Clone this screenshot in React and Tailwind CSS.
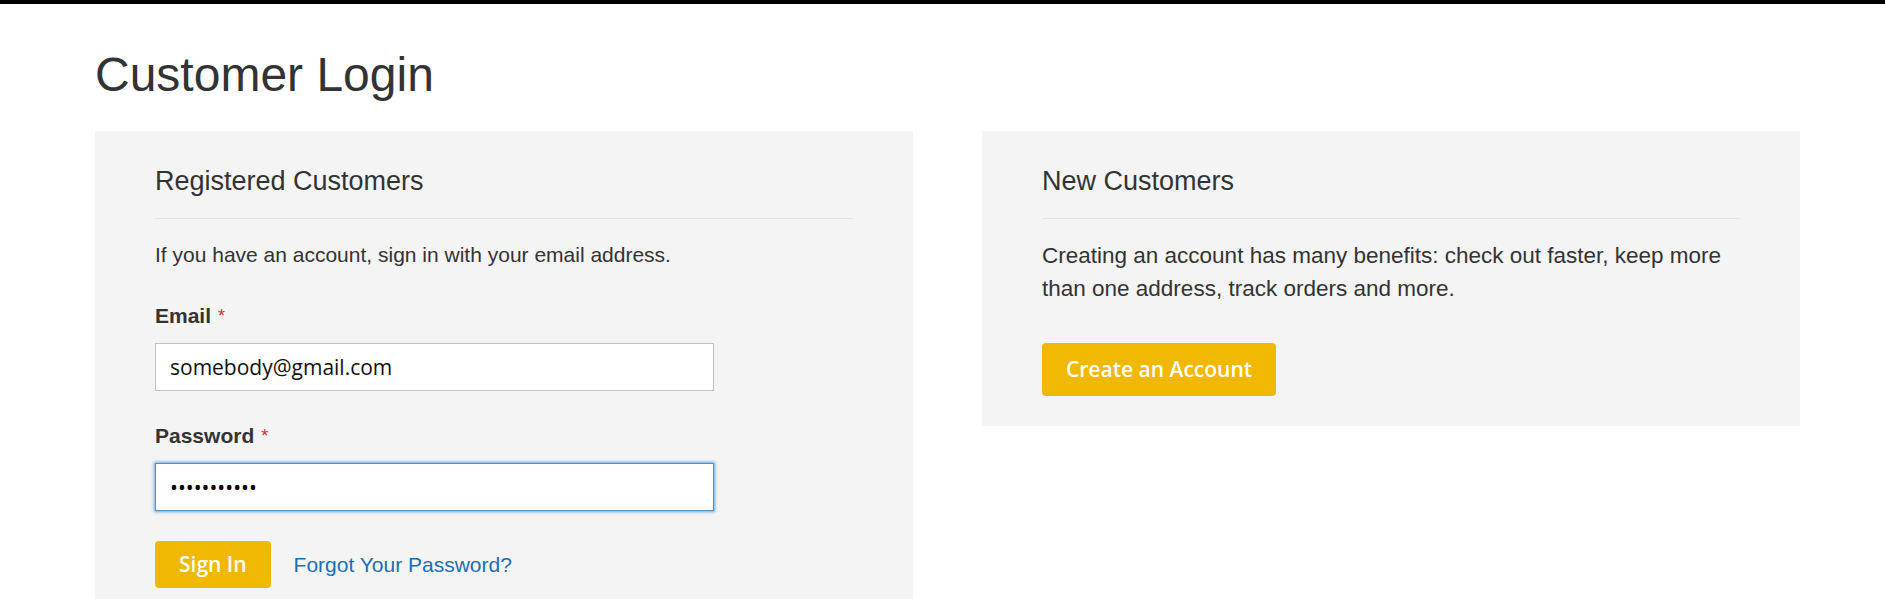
import React from "react";

const arial = { fontFamily: '"Liberation Sans", Arial, sans-serif' };
const openSans = { fontFamily: '"Open Sans", sans-serif' };

export default function App() {
  return (
    <div className="min-h-[599px] bg-white text-[#333]" style={arial}>
      <div className="h-[4px] w-full bg-black" />
      <div className="pl-[95px] pr-[85px]">
        <h1 className="mt-[44px] text-[48px] leading-[53px] font-normal text-[#333]">
          Customer Login
        </h1>
        <div className="mt-[30px] flex items-start gap-[69px]">
          {/* Registered customers */}
          <div className="w-[818px] bg-[#f4f4f4] px-[60px] pt-[35px] pb-[60px]">
            <div className="border-b border-[#e4e4e4] pb-[22px]">
              <h2 className="text-[27px] leading-[30px] font-normal">Registered Customers</h2>
            </div>
            <p className="mt-[21px] text-[21px] leading-[30px]">
              If you have an account, sign in with your email address.
            </p>
            <label className="mt-[31px] block text-[21px] leading-[30px] font-bold">
              Email
              <span className="ml-[7px] align-top text-[18px] font-normal text-[#e02b27]">*</span>
            </label>
            <input
              type="email"
              readOnly
              value="somebody@gmail.com"
              className="mt-[12px] block h-[48px] w-[559px] border border-[#c2c2c2] bg-white px-[14px] text-[21px] text-[#111] outline-none"
              style={openSans}
            />
            <label className="mt-[30px] block text-[21px] leading-[30px] font-bold">
              Password
              <span className="ml-[7px] align-top text-[18px] font-normal text-[#e02b27]">*</span>
            </label>
            <input
              type="password"
              readOnly
              value="12345678901"
              className="mt-[12px] block h-[48px] w-[559px] border border-[#5a8fba] bg-white px-[14px] text-[21px] text-black shadow-[0_0_3px_1px_#68a8e0] outline-none"
              style={openSans}
            />
            <div className="mt-[30px] flex items-center">
              <button
                className="h-[47px] rounded-[4px] bg-[#f0b800] px-[24px] text-[21px] font-semibold text-white"
                style={openSans}
              >
                Sign In
              </button>
              <a className="ml-[23px] text-[21px] text-[#1a6fb5]">Forgot Your Password?</a>
            </div>
          </div>

          {/* New customers */}
          <div className="w-[818px] bg-[#f4f4f4] px-[60px] pt-[35px] pb-[30px]">
            <div className="border-b border-[#e4e4e4] pb-[22px]">
              <h2 className="text-[27px] leading-[30px] font-normal">New Customers</h2>
            </div>
            <p className="mt-[20px] text-[22.5px] leading-[33px]">
              Creating an account has many benefits: check out faster, keep more than one address, track orders and more.
            </p>
            <button
              className="mt-[38px] h-[53px] rounded-[4px] bg-[#f0b800] px-[24px] text-[21px] font-semibold text-white"
              style={openSans}
            >
              Create an Account
            </button>
          </div>
        </div>
      </div>
    </div>
  );
}
